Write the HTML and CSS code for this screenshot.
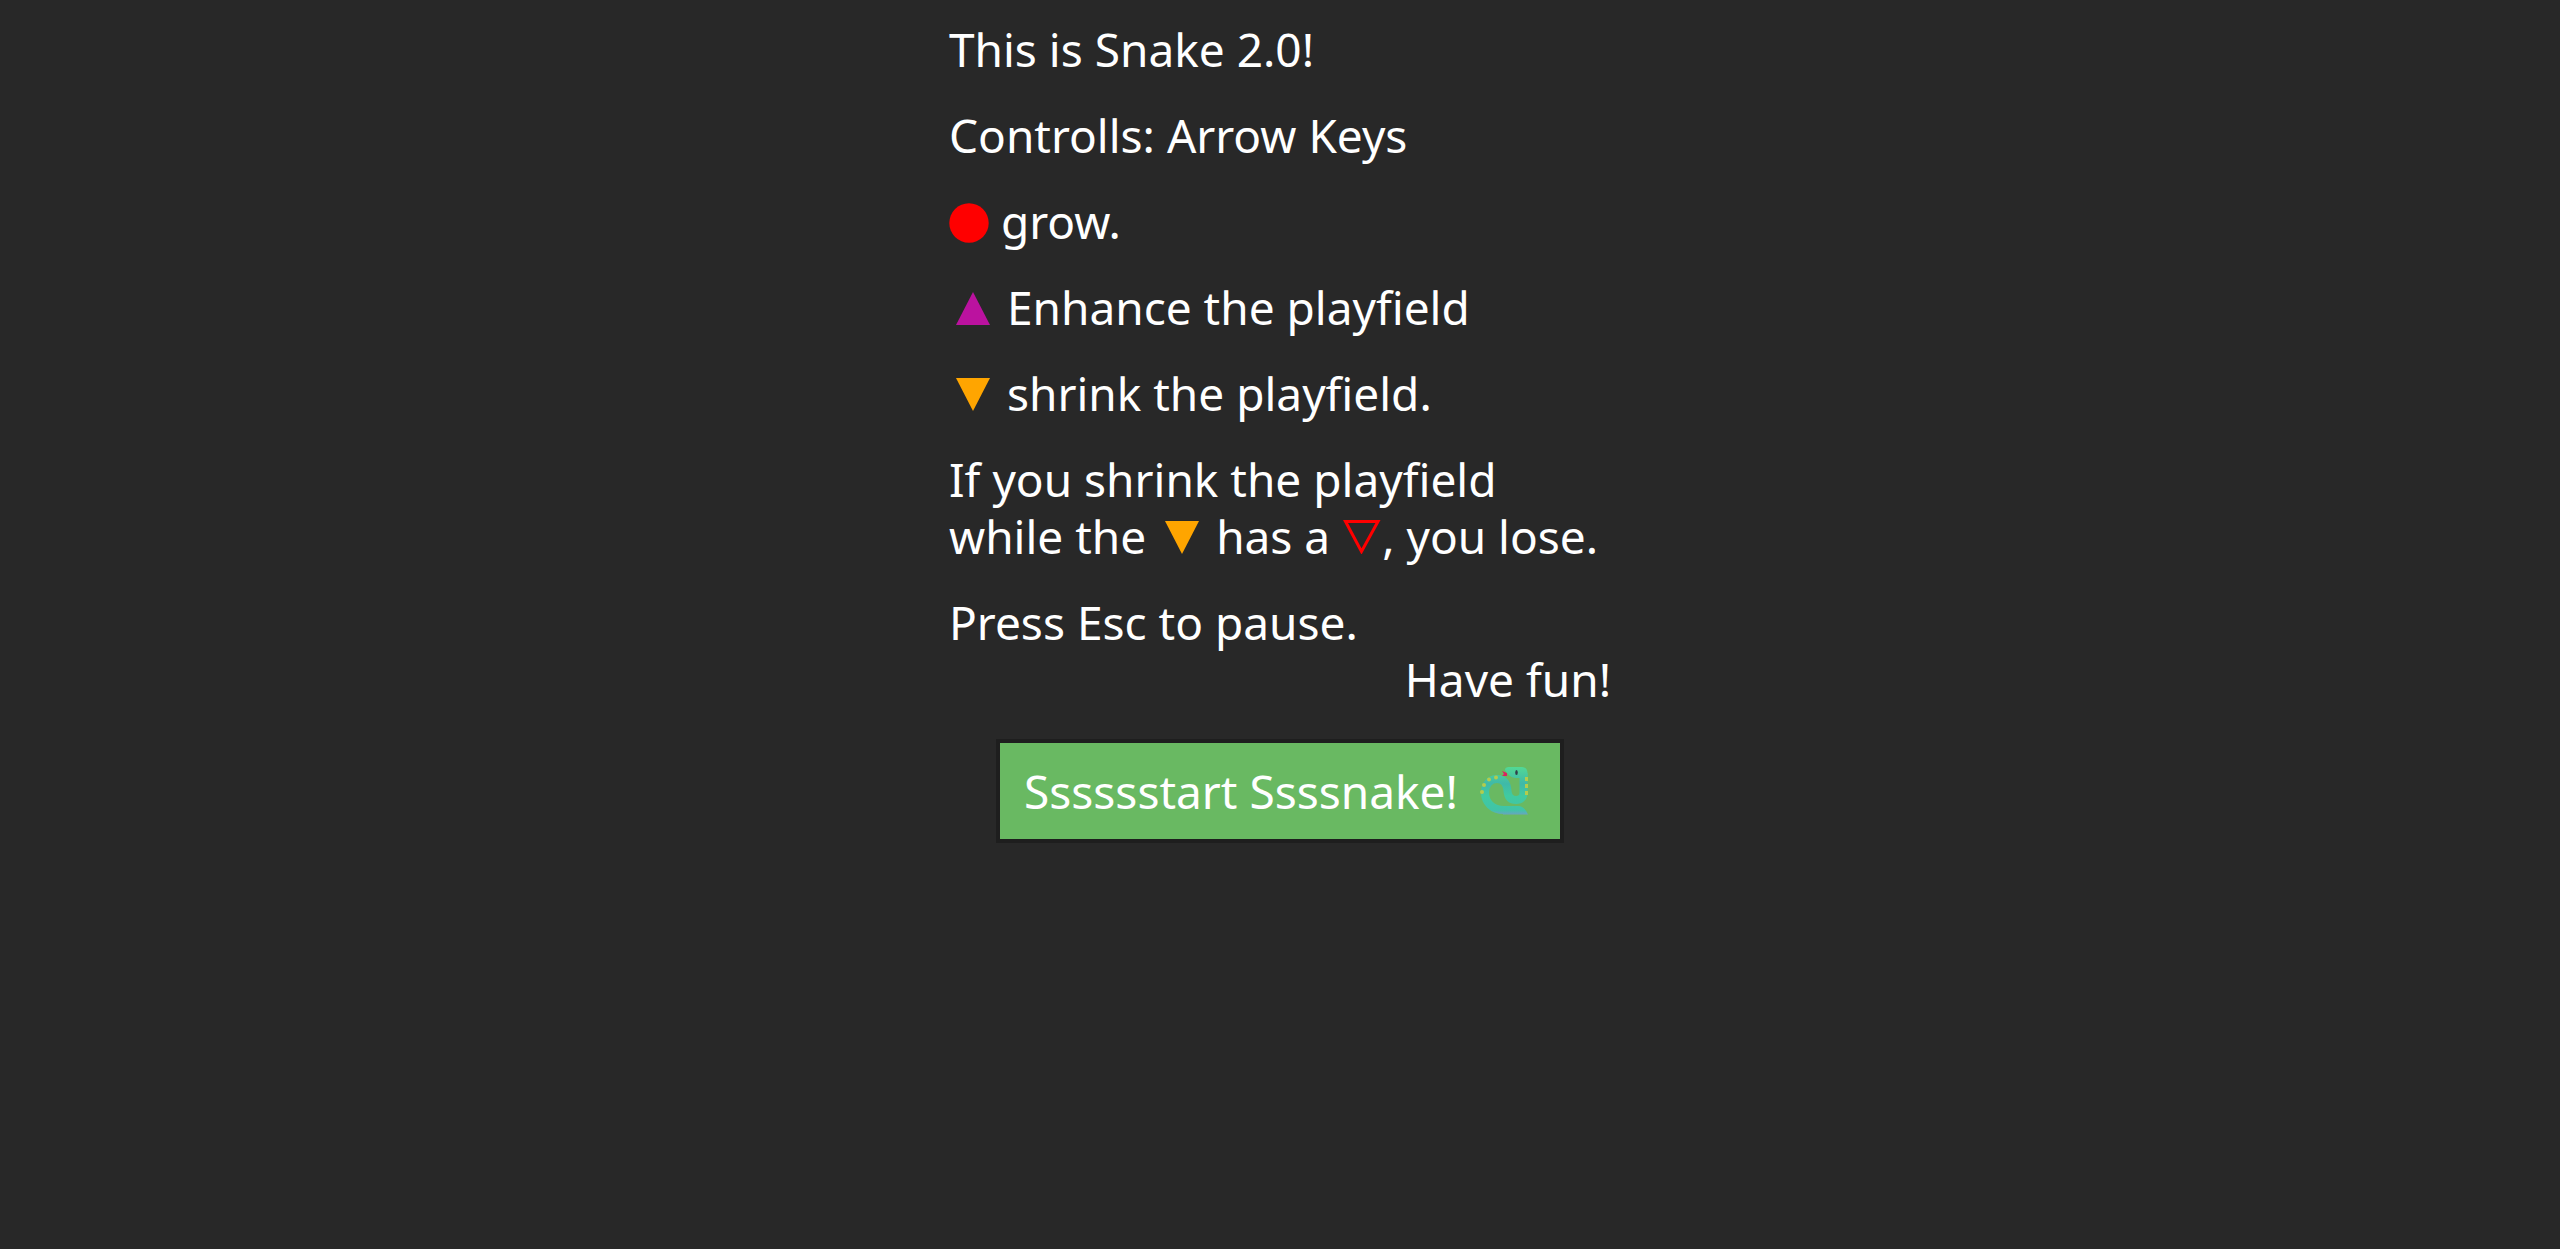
FILE: index.html
```html
<!DOCTYPE html>
<html lang="en">
<head>
<meta charset="utf-8">
<meta name="viewport" content="width=device-width, initial-scale=1">
<title>Snake 2.0</title>
<link rel="stylesheet" href="styles.css">
</head>
<body>
<main class="intro">
  <p>This is Snake 2.0!</p>
  <p>Controlls: Arrow Keys</p>
  <p><svg class="dot" viewBox="0 0 40 40" role="img" aria-label="Red dot"><circle cx="20" cy="20" r="19.7" fill="#ff0000"/></svg> grow.</p>
  <p><svg class="mark" viewBox="0 0 46 34" role="img" aria-label="Up triangle"><path d="M7 34 24 1 41 34Z" fill="#bb129f"/></svg> Enhance the playfield</p>
  <p><svg class="mark" viewBox="0 0 46 34" role="img" aria-label="Down triangle"><path d="M7 1H41L24 34Z" fill="#ffa500"/></svg> shrink the playfield.</p>
  <p>If you shrink the playfield<br>while the <svg class="mark" viewBox="0 0 46 34" role="img" aria-label="Down triangle"><path d="M7 1H41L24 34Z" fill="#ffa500"/></svg> has a <svg class="outline" viewBox="0 0 40 34" role="img" aria-label="Red outline"><path d="M3.500 1.500H36L19.500 31.500Z" fill="none" stroke="#ff0000" stroke-width="3"/></svg>, you lose.</p>
  <p>Press Esc to pause.<span class="wish">Have fun!</span></p>
  <button class="start" type="button">Sssssstart Ssssnake!
    <svg class="snake" viewBox="0 0 48 48" aria-hidden="true">
      <defs>
        <linearGradient id="skin" gradientUnits="userSpaceOnUse" x1="0" y1="0" x2="0" y2="48">
          <stop offset="0" stop-color="#52d895"/><stop offset=".35" stop-color="#3fb9a8"/><stop offset=".6" stop-color="#40cba0"/><stop offset=".9" stop-color="#40c4a8"/><stop offset="1" stop-color="#6da0c4"/>
        </linearGradient>
      </defs>
      <path d="M27 9H22L24 7 22 4 27 6Z" fill="#dc2160"/>
      <path d="M24 43C12 43 5 35 5 25.500C5 17.500 10 12 17 12C24 12 27 17 27.500 24C28 30 31 33 36 33C41 33 43.500 30 43.500 26V6" fill="none" stroke="url(#skin)" stroke-width="8"/>
      <path d="M23 39H39Q45 40 48 47.500H23Z" fill="url(#skin)"/>
      <path d="M25 3Q25 0 29 0H42Q47 0 47.500 6V11H35Q29 10 25 3Z" fill="url(#skin)"/>
      <g fill="#b4cc4c"><circle cx="16" cy="10.500" r="2"/><circle cx="9" cy="12.500" r="2"/><circle cx="4" cy="18" r="2"/><circle cx="2" cy="25" r="2"/><path d="M45 10h3v4h-3zM45 17h3v4h-3zM45 24h3v4h-3z"/></g>
      <ellipse cx="36.500" cy="5.500" rx="1.300" ry="2.500" fill="#32404a"/>
    </svg>
  </button>
</main>
</body>
</html>
```
FILE: styles.css
```css
body {
  margin: 0;
  padding: 21px 16px;
  background: #282828;
  color: #fff;
  font: 46px/57px "Noto Sans", sans-serif;
}

.intro {
  display: grid;
  gap: 29px;
  max-width: 662px;
  margin: 0 auto;
}

.intro p {
  margin: 0;
}

.intro p svg {
  display: inline-block;
}

.dot {
  width: 40px;
  height: 40px;
  vertical-align: -4px;
}

.mark {
  width: 46px;
  height: 34px;
  vertical-align: baseline;
}

.outline {
  width: 40px;
  height: 34px;
  vertical-align: baseline;
}

.wish {
  display: block;
  text-align: right;
}

.start {
  display: flex;
  align-items: center;
  justify-content: space-between;
  justify-self: center;
  width: 568px;
  max-width: 100%;
  min-height: 104px;
  margin-top: 2px;
  padding: 0 32px 0 24px;
  border: 4px solid #1e1e1e;
  background: #69b962;
  color: #fff;
  font: 46px/57px "Noto Sans", sans-serif;
  cursor: pointer;
}

.snake {
  width: 48px;
  height: 48px;
}
```
